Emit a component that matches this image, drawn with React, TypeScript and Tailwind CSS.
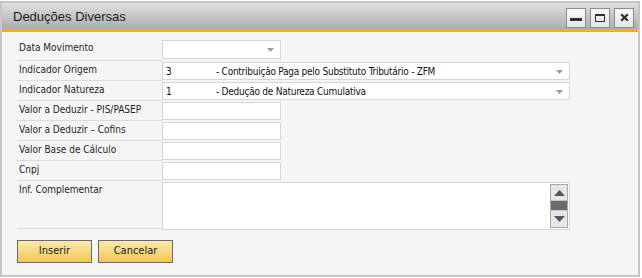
import { useState } from 'react'

interface Field {
  label: string
  kind: 'date' | 'select' | 'text' | 'memo'
  code?: string
  text?: string
}

const fields: Field[] = [
  { label: 'Data Movimento', kind: 'date' },
  {
    label: 'Indicador Origem',
    kind: 'select',
    code: '3',
    text: '- Contribuição Paga pelo Substituto Tributário - ZFM',
  },
  {
    label: 'Indicador Natureza',
    kind: 'select',
    code: '1',
    text: '- Dedução de Natureza Cumulativa',
  },
  { label: 'Valor a Deduzir - PIS/PASEP', kind: 'text' },
  { label: 'Valor a Deduzir – Cofins', kind: 'text' },
  { label: 'Valor Base de Cálculo', kind: 'text' },
  { label: 'Cnpj', kind: 'text' },
  { label: 'Inf. Complementar', kind: 'memo' },
]

function Arrow() {
  return (
    <svg width="7" height="4" viewBox="0 0 7 4" className="absolute right-[6px] top-[7px]">
      <path d="M0 0h7L3.5 4z" fill="#9a9a9a" />
    </svg>
  )
}

function Row({ field, first }: { field: Field; first: boolean }) {
  const memo = field.kind === 'memo'
  const height = memo ? 'h-[48px]' : first ? 'h-[22px]' : 'h-[20px]'
  return (
    <div className={`flex ${height}`}>
      <div className="ml-[15px] w-[145px] shrink-0 border-b border-[#dadada] pl-[2px] pt-[2px] leading-[14px] text-[#1e1e1e]">
        {field.label}
      </div>
      {field.kind === 'date' && (
        <div className="relative mt-px h-[19px] w-[119px] border border-[#d6d6d6] bg-white">
          <Arrow />
        </div>
      )}
      {field.kind === 'select' && (
        <div className="relative mt-px flex h-[18px] w-[408px] items-center border border-[#d6d6d6] bg-white pl-[3px] text-[#111]">
          <span className="w-[50px]">{field.code}</span>
          <span className="tracking-[-0.25px]">{field.text}</span>
          <Arrow />
        </div>
      )}
      {field.kind === 'text' && (
        <div className="mt-px h-[18px] w-[119px] border border-[#d6d6d6] bg-white" />
      )}
      {memo && (
        <div className="relative mt-px h-[48px] w-[408px] border border-[#d6d6d6] bg-white">
          <div className="absolute right-px top-px flex h-[44px] w-[18px] flex-col border border-[#a8a8a8] bg-[#e6e6e6]">
            <div className="flex h-[16px] items-center justify-center border-b border-[#c8c8c8]">
              <svg width="11" height="6" viewBox="0 0 11 6">
                <path d="M5.5 0L11 6H0z" fill="#4b5a69" />
              </svg>
            </div>
            <div className="h-[9px] bg-[#6b6b6b]" />
            <div className="flex flex-1 items-center justify-center border-t border-[#c8c8c8]">
              <svg width="11" height="6" viewBox="0 0 11 6">
                <path d="M0 0h11L5.5 6z" fill="#4b5a69" />
              </svg>
            </div>
          </div>
        </div>
      )}
    </div>
  )
}

function WinButton({ children }: { children: React.ReactNode }) {
  return (
    <div className="flex h-[20px] w-[20px] items-center justify-center border border-[#8c8c8c] bg-gradient-to-b from-[#fafafa] to-[#e4e4e4]">
      {children}
    </div>
  )
}

export default function App() {
  const [busy] = useState(false)
  return (
    <div
      className="h-[278px] w-[642px] bg-white pt-px text-[10px]"
      style={{ fontFamily: '"DejaVu Sans Condensed", "DejaVu Sans", sans-serif' }}
    >
      <div className="flex h-[276px] w-[640px] flex-col border-2 border-[#c6c6c6] bg-[#f5f5f5]">
        <div className="flex h-[26px] shrink-0 items-center bg-gradient-to-b from-[#e0e0e0] to-[#acacac] pl-[11px] pr-[4px]">
          <span
            className="flex-1 pt-px text-[13px] text-[#1a1a1a]"
            style={{ fontFamily: '"Liberation Sans", Arial, sans-serif' }}
          >
            Deduções Diversas
          </span>
          <div className="mt-[3px] flex gap-[4px]">
            <WinButton>
              <div className="mt-[4px] h-[3px] w-[12px] bg-[#2e2e2e]" />
            </WinButton>
            <WinButton>
              <div className="h-[8px] w-[10px] border border-t-[2px] border-[#2e2e2e]" />
            </WinButton>
            <WinButton>
              <svg width="9" height="9" viewBox="0 0 9 9">
                <path d="M1.2 1.2l6.6 6.6M7.8 1.2l-6.6 6.6" stroke="#2e2e2e" strokeWidth="2.2" />
              </svg>
            </WinButton>
          </div>
        </div>
        <div className="h-[3px] shrink-0 bg-[#f3b200]" />
        <div className="flex flex-1 flex-col pt-[7px]">
          {fields.map((f, i) => (
            <Row key={f.label} field={f} first={i === 0} />
          ))}
          <div className="ml-[15px] mt-[11px] flex gap-[6px]">
            <button
              disabled={busy}
              className="h-[23px] w-[75px] border border-[#6a6a6a] bg-gradient-to-b from-[#fbe9a8] to-[#f0c84e] text-[11px] text-[#1a1a1a]"
            >
              Inserir
            </button>
            <button className="h-[23px] w-[75px] border border-[#6a6a6a] bg-gradient-to-b from-[#fbe9a8] to-[#f0c84e] text-[11px] text-[#1a1a1a]">
              Cancelar
            </button>
          </div>
        </div>
      </div>
    </div>
  )
}
